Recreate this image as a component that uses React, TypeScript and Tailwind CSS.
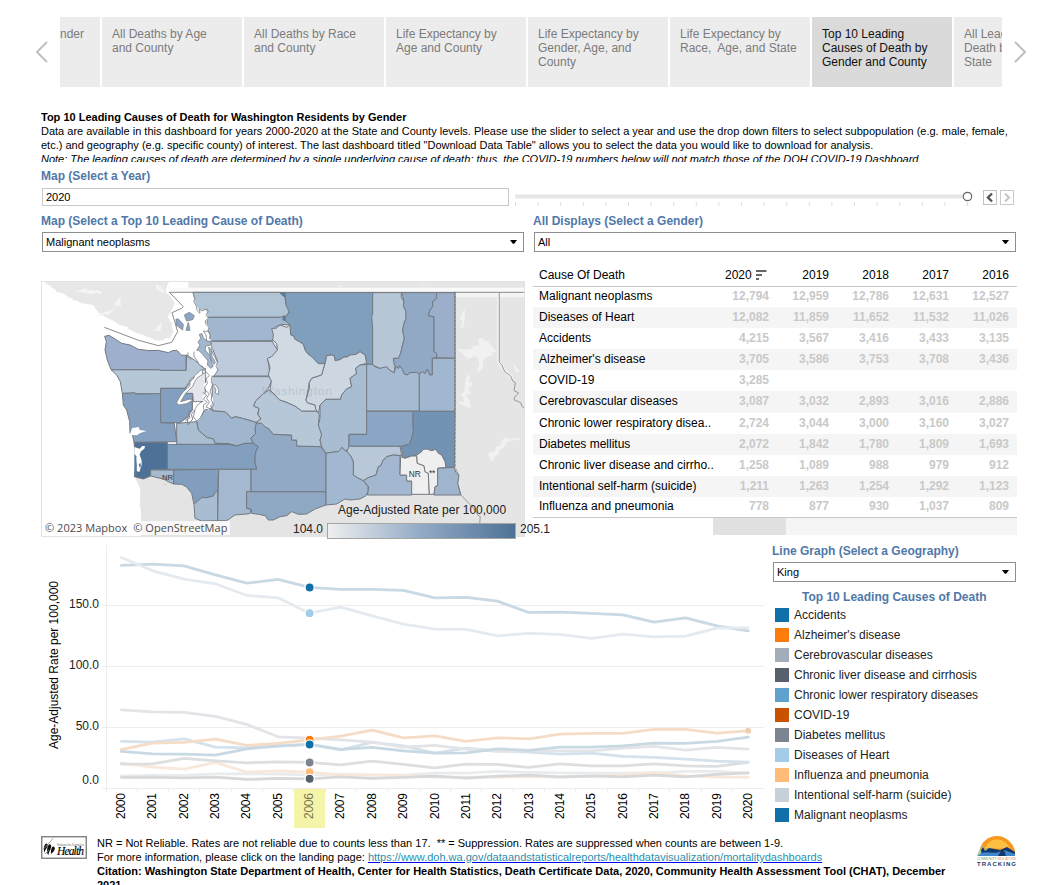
import React from "react";

const ARIAL = "font-['Liberation_Sans',Arial,sans-serif]";

const tabs = [
  "All Deaths by Age\nand County",
  "All Deaths by Race\nand County",
  "Life Expectancy by\nAge and County",
  "Life Expectancy by\nGender, Age, and\nCounty",
  "Life Expectancy by\nRace,  Age, and State",
  "Top 10 Leading\nCauses of Death by\nGender and County",
  "All Leading Causes of\nDeath by Gender and\nState",
];

const rows: [string, string[], string][] = [
  ["Malignant neoplasms", ["12,794", "12,959", "12,786", "12,631", "12,527"], "h-5"],
  ["Diseases of Heart", ["12,082", "11,859", "11,652", "11,532", "11,026"], "h-[21px]"],
  ["Accidents", ["4,215", "3,567", "3,416", "3,433", "3,135"], "h-[21px]"],
  ["Alzheimer's disease", ["3,705", "3,586", "3,753", "3,708", "3,436"], "h-[21px]"],
  ["COVID-19", ["3,285", "", "", "", ""], "h-[21px]"],
  ["Cerebrovascular diseases", ["3,087", "3,032", "2,893", "3,016", "2,886"], "h-[22px]"],
  ["Chronic lower respiratory disea..", ["2,724", "3,044", "3,000", "3,160", "3,027"], "h-[21px]"],
  ["Diabetes mellitus", ["2,072", "1,842", "1,780", "1,809", "1,693"], "h-[21px]"],
  ["Chronic liver disease and cirrho..", ["1,258", "1,089", "988", "979", "912"], "h-[21px]"],
  ["Intentional self-harm (suicide)", ["1,211", "1,263", "1,254", "1,292", "1,123"], "h-[21px]"],
  ["Influenza and pneumonia", ["778", "877", "930", "1,037", "809"], "h-5"],
];

const legend: [string, string][] = [
  ["Accidents", "bg-[#1170aa]"],
  ["Alzheimer's disease", "bg-[#fc7d0b]"],
  ["Cerebrovascular diseases", "bg-[#a3acb9]"],
  ["Chronic liver disease and cirrhosis", "bg-[#57606c]"],
  ["Chronic lower respiratory diseases", "bg-[#5fa2ce]"],
  ["COVID-19", "bg-[#c85200]"],
  ["Diabetes mellitus", "bg-[#7b848f]"],
  ["Diseases of Heart", "bg-[#a3cce9]"],
  ["Influenza and pneumonia", "bg-[#ffbc79]"],
  ["Intentional self-harm (suicide)", "bg-[#c8d0d9]"],
  ["Malignant neoplasms", "bg-[#1170aa]"],
];

const series: [string, number[]][] = [
  ["#e9ecee", [708, 707, 707, 702, 702, 703, 705, 703, 706, 706, 700, 700, 695, 698, 699, 700, 700, 700, 695, 695, 700]],
  ["#f8e8dc", [670, 682, 688, 668, 697, 693, 697, 705, 705, 707, 712, 712, 712, 710, 712, 710, 705, 698, 708, 712, 712]],
  ["#dcdedf", [673, 672, 656, 663, 669, 666, 668, 675, 664, 674, 684, 673, 674, 683, 672, 678, 678, 672, 678, 680, 668]],
  ["#d5e2ec", [605, 607, 597, 622, 624, 618, 614, 630, 608, 618, 640, 625, 633, 637, 643, 640, 650, 653, 658, 664, 667]],
  ["#d6d8da", [713, 712, 714, 712, 719, 716, 717, 711, 716, 713, 709, 715, 709, 706, 711, 708, 711, 706, 711, 704, 699]],
  ["#e3e4e8", [510, 516, 518, 530, 554, 591, 595, 600, 607, 622, 617, 628, 635, 633, 633, 633, 625, 620, 631, 623, 628]],
  ["#f5dcc7", [629, 610, 608, 598, 617, 611, 600, 589, 571, 594, 588, 605, 594, 597, 583, 581, 581, 569, 569, 580, 573]],
  ["#c8d9e4", [635, 642, 643, 646, 627, 619, 614, 629, 623, 633, 640, 639, 627, 632, 622, 622, 618, 610, 611, 605, 592]],
  ["#c8d9e4", [77, 73, 78, 105, 130, 119, 143, 149, 149, 152, 174, 173, 184, 218, 217, 221, 225, 247, 234, 258, 273]],
  ["#e4eaf0", [53, 93, 118, 132, 167, 174, 220, 202, 228, 253, 268, 269, 288, 281, 284, 296, 283, 291, 289, 265, 264]],
];

const dots: [number, string][] = [
  [143, "#1170aa"], [220, "#a3cce9"], [600, "#fc7d0b"], [614, "#1170aa"],
  [668, "#7b848f"], [697, "#ffbc79"], [717, "#57606c"],
];

/* West side of the state; the east side uses the same units shifted by 705. */
const west: [string, string][] = [
  ["#b0c4d6", "473,52 735,52 750,62 752,85 763,110 750,127 518,127 510,105 490,112 478,85"],
  ["#a1b7cf", "518,127 735,127 750,122 765,150 740,148 722,155 714,165 718,190 712,197 522,198 526,180 514,160"],
  ["#bdcbdc", "522,199 712,199 716,208 728,225 724,240 710,246 698,252 702,275 705,303 530,303 548,260 540,240 530,215"],
  ["#bdcbdc", "530,305 705,305 710,318 700,340 686,355 662,378 656,393 672,400 668,418 678,432 665,443 640,435 622,430 600,425 590,430 570,410 535,408 525,390 532,355"],
  ["#9fb6ce", "535,408 570,410 590,430 600,425 622,430 640,435 665,443 660,460 662,475 648,490 655,505 630,505 605,513 580,506 540,505 535,492 515,487 490,465 485,440 510,405 525,400"],
  ["#a9bed1", "425,445 485,440 490,465 515,487 535,492 540,505 580,506 605,513 425,508"],
  ["#b6c7d7", "228,284 375,284 453,286 455,240 478,255 500,272 515,290 470,310 450,340 377,340 377,357 262,355 256,320 245,300"],
  ["#9eb0cd", "209,184 222,181 240,192 260,205 285,210 310,223 345,227 370,226 400,233 412,227 425,226 432,232 440,241 453,240 453,286 375,286 375,284 228,284 217,255 210,225 214,200"],
  ["#86a1c0", "262,355 300,353 302,357 377,356 377,443 418,445 425,500 297,502 292,478 285,475 284,440 275,405 265,390"],
  ["#829fbf", "377,340 450,340 473,355 472,400 460,425 435,443 377,443"],
  ["#e3e5ec", "513,280 510,380 475,380 473,355 445,355 455,335 475,315 490,295"],
  ["#839fbf", "397,508 580,508 605,513 630,505 655,505 670,515 664,527 660,540 660,560 665,583 397,583"],
  ["#4e7297", "297,502 397,502 397,583 347,585 347,603 325,612 298,605 303,560"],
  ["#a5bbd0", "347,585 416,585 416,627 400,620 385,612 347,603"],
  ["#819ebf", "416,585 551,583 548,648 540,652 535,663 515,668 500,668 490,676 477,688 470,655 455,636 440,628 416,627"],
  ["#a8bdd2", "548,648 548,737 500,738 480,730 477,688 490,676 500,668 515,668 535,663 540,652"],
  ["#a4b9cf", "551,583 648,583 648,650 635,650 635,700 648,702 645,716 600,720 575,737 548,737"],
  ["#8fa8c4", "635,650 873,650 873,690 840,702 815,717 790,718 770,710 755,722 735,725 715,735 700,735 690,722 670,718 650,715 648,702 635,700"],
  ["#92a9c6", "680,445 690,455 702,462 715,478 770,480 770,495 785,495 785,513 860,515 862,525 873,535 873,650 648,650 648,583 665,583 660,560 660,540 664,527 670,515 655,505 648,490 662,475 660,460 665,443"],
];

const east: [string, string][] = [
  ["#b6c7d7", "-3,345 15,360 28,374 50,382 75,393 95,408 140,408 148,418 145,450 152,465 155,480 150,495 155,515 80,513 80,495 65,495 65,480 10,478 -3,462 -15,455 -25,445 -43,443 -27,432 -36,418 -33,400 -49,393 -43,378 -19,355"],
  ["#7f9fbd", "30,53 308,53 308,268 290,268 288,250 285,240 270,230 258,238 240,240 232,246 222,246 210,254 195,257 193,243 185,240 170,242 165,266 145,266 128,248 112,235 105,225 100,208 88,200 75,193 70,182 62,180 60,150 42,132 58,112 48,90 45,65"],
  ["#d0dae3", "50,157 60,150 62,180 70,182 75,193 88,200 100,208 105,225 112,235 128,248 145,266 165,266 155,300 125,310 118,322 115,340 108,375 112,383 135,390 140,408 95,408 75,393 50,382 28,374 15,360 0,345 4,318 -5,300 0,278 -8,250 5,245 22,225 20,205 8,195 10,178 5,160 18,160 30,150"],
  ["#ccd7e1", "165,266 170,242 185,240 193,243 195,257 210,254 222,246 232,246 240,240 258,238 270,230 285,240 290,265 270,270 257,280 260,295 240,310 245,335 230,342 215,360 212,373 168,373 150,390 146,413 138,405 135,390 112,383 108,375 118,340 118,322 125,310 155,300"],
  ["#a8bdd2", "168,373 212,373 215,360 230,342 245,335 240,310 260,295 257,280 270,270 290,268 290,478 237,478 237,525 225,527 217,517 205,530 185,532 168,535 155,515 150,495 155,480 145,450 150,430 150,390"],
  ["#a5bbd1", "290,268 308,268 315,275 330,280 340,275 350,275 358,285 373,293 378,272 385,280 388,272 398,284 402,296 412,300 418,293 440,292 448,297 448,408 290,408"],
  ["#b7c7d7", "308,53 395,53 393,65 402,80 400,92 408,110 408,130 402,145 398,165 403,190 397,212 392,235 385,250 370,250 375,270 373,293 358,285 350,275 330,280 308,270 308,160 305,125 308,118"],
  ["#92a9c6", "395,53 500,53 500,70 488,80 488,95 480,105 475,122 492,125 492,230 500,235 500,248 487,250 487,300 479,300 472,282 465,296 458,290 448,297 440,292 418,293 412,300 402,296 398,284 388,272 385,280 373,270 370,250 385,250 392,235 397,212 403,190 398,165 402,145 408,130 408,110 400,92 402,80"],
  ["#9bafca", "500,53 555,53 555,250 500,248 500,235 492,230 492,125 475,122 480,105 488,95 488,80 500,70"],
  ["#a1b6cf", "487,250 555,250 555,409 448,409 448,297 458,290 465,296 472,282 479,300 487,300"],
  ["#8ba6c4", "290,409 430,409 428,430 430,470 425,490 418,508 390,514 237,514 237,478 290,478"],
  ["#7393b5", "430,409 555,409 553,577 528,577 525,560 515,540 505,535 497,523 482,527 470,522 455,530 440,540 398,550 398,535 393,515 418,508 425,490 430,470"],
  ["#b9c8d9", "237,514 390,514 395,542 370,540 350,545 338,558 333,572 325,575 318,600 295,608 280,617 265,610 250,600 250,560 243,545 230,530"],
  ["#a3b8d0", "390,542 390,600 410,600 410,618 425,618 425,660 292,660 296,635 280,617 295,608 318,600 325,575 333,572 338,558 350,545 370,540"],
  ["#efefef", "392,545 405,550 425,543 440,543 442,565 462,572 465,590 475,595 478,658 425,658 425,618 410,618 410,600 390,600"],
  ["#efefef", "440,540 455,530 460,523 470,522 485,527 497,523 505,535 515,540 525,560 528,577 503,580 503,632 495,635 492,658 478,658 475,595 465,590 462,572 442,565"],
  ["#9fb5ce", "503,580 553,577 557,592 567,600 563,625 572,660 492,660 495,635 503,632"],
  ["#a2b7d0", "168,535 185,532 205,530 217,517 225,527 232,530 243,545 250,560 250,600 265,610 280,617 294,635 294,650 288,662 270,672 240,675 225,672 200,687 168,690"],
];

function WashingtonMap() {
  return (
    <svg className="block h-full w-full" viewBox="21 21 1446 762">
      <defs>
        <filter id="coast" x="-5%" y="-5%" width="110%" height="110%">
          <feTurbulence type="fractalNoise" baseFrequency="0.045" numOctaves="2" seed="4" />
          <feDisplacementMap in="SourceGraphic" scale="9" xChannelSelector="R" yChannelSelector="G" />
        </filter>
      </defs>
      <rect x="18" y="18" width="1452" height="768" fill="#fff" />
      <path d="M740 18H1470V786H320L315 640L300 606L480 560L560 200L480 52L470 18Z" fill="#e5e5e5" />
      <path d="M300 170L370 200L430 110L470 60L510 120L560 300L540 400L480 440L460 260L400 226L310 212Z" fill="#fff" />
      <g filter="url(#coast)">
        <path d="M20 14H405L392 45L420 85L400 125L415 170L405 190L370 197L300 172L200 120L175 90L140 85L60 45Z" fill="#e7e7e7" />
        <path d="M120 50l30-10 20 8 20-4 10 10-28 4M180 125l60-25-15 18zM240 90l20-30-6 34zM360 26l35 25-30-6M330 160l30 5 20-25-4 30z" fill="#f4f4f4" />
      </g>
      <path d="M318 612L385 612L440 630L470 655L480 740L575 740L640 715L700 735L873 690L998 655L1000 786H318L322 720L314 690L319 650Z" fill="#e4e4e4" />
      <path d="M460 18H1470V38H460Z" fill="#e6e6e6" />
      <path d="M403 45H1467" stroke="#f9f9f9" strokeWidth="14" />
      <path d="M1262 58H1470" stroke="#f4f4f4" strokeWidth="17" />
      <path d="M1391 62V262L1432 310" fill="none" stroke="#f2f2f2" strokeWidth="9" />
      <g fill="#f1f1f1">
        <path d="M1276 125l8-18 6-2 0 24-6 32-6-4 4-20-6-4zM1265 220l20 4 22-2 8-8 14-2 4-8-4-12 14-4 6 10 18 0-6 8 10 6 14 18-16 4 6 8-22 4-10 14 2 16-10 12-10 2 8-22-4-20-10-4-20 8z" />
        <path d="M1290 328l6-28 10 2-6 18 12 2-2 12-10 6 8 14-16 6 10 14 6 26-20-8-18-8 4-6 14 4-4-16-8-6 12-8zM1434 266l6 4 14 20-12 0zM1359 540l4-8 18-4 0-12 14-4 8-18 12-8 4 6 36-2-2 4-34 4-14 20-10 6-4 14-14 8 0 10-8 2z" />
        <path d="M1160 20l6 12 12 6-14-4zM920 30l0 8-10-6z" />
      </g>
      <path d="M403 52H1467" stroke="#8c8c8c" strokeWidth="3" />
      <path d="M403 52L445 95L440 100L411 113L428 170L410 202L370 212L308 195L208 157" fill="none" stroke="#8c8c8c" strokeWidth="3" strokeLinejoin="round" />
      <path d="M1393 52V262l7 7 9 20 18 14 6 15 8 5-4 24 14 7-12 12-2 8 20 9 4 11 7 5 2 12" fill="none" stroke="#888" strokeWidth="2.5" />
      <path d="M1262 580l9 20-3 25 10 35 14 15 28 30 8 15 8 5-2 20-14 25-4 12" fill="none" stroke="#8b8b8b" strokeWidth="2.5" />
      <g stroke="#737980" strokeWidth="3" strokeLinejoin="round">
        {west.map(([c, p]) => <polygon key={p} fill={c} points={p} />)}
        <g transform="translate(705 0)">
          {east.map(([c, p]) => <polygon key={p} fill={c} points={p} />)}
        </g>
        <path fill="#587fa6" d="M735 53l15 0 2 12-8-2zM745 124l6 2 0 12-8-4z" />
      </g>
      <path d="M1260 50V577" stroke="#7b8086" strokeWidth="3.5" strokeDasharray="9 3" />
      {/* Puget Sound and its islands */}
      <g transform="translate(315 30)" strokeWidth="2.5" strokeLinejoin="round">
        <path fill="#fff" d="M158 22L165 55L178 75L198 74L205 100L198 112L207 128L200 150L215 170L218 205L232 232L230 258L218 275L216 300L212 322L220 345L205 375L192 362L188 380L178 405L165 408L160 385L172 350L190 352L188 335L200 320L190 300L200 290L198 248L178 238L162 215L160 200L138 210L120 205L130 100L140 60Z" />
        <path fill="none" stroke="#80868d" d="M158 22L165 40L161 50L168 60L172 78L180 85L178 72L186 78L200 72L205 80L198 90L205 100L195 108L198 118L207 128L202 140L190 138L198 150L200 168L215 170L214 190L218 205L224 215L232 232L228 245L235 255L220 276L216 272L214 290L218 300L210 318L215 330L214 345L222 360L212 372L198 366L208 352L200 340L208 326L196 316L194 306L202 296L199 280L208 272L200 262" />
        <path fill="none" stroke="#80868d" d="M138 208L146 218L154 224M144 202L144 214M162 200L162 215L172 228L178 240L192 250L198 262L186 268M188 322L200 330L190 342L202 352L190 360L192 378L182 398L170 408L160 396L166 370L176 356L188 350" />
        <g stroke="#80868d" fill="#8ba7c5">
          <path d="M133 90L148 82L163 92L158 104L140 108Z" />
          <path d="M108 102L115 102L130 118L128 135L108 120Z" />
          <path d="M145 112L150 136L138 136Z" />
          <path fill="#a1b7cf" d="M178 148L186 146L190 158L200 168L212 170L212 180L196 184L196 196L212 214L214 232L220 244L212 250L202 240L204 228L188 208L176 196L170 196L180 180L174 172L182 160Z" />
          <path fill="#a1b7cf" d="M206 186L214 196L216 214L226 232L222 238L212 222Z" />
          <path fill="#fff" d="M218 300L228 300L236 314L236 328L226 324L228 312Z" />
        </g>
        <path fill="#fff" stroke="#80868d" d="M186 252L164 272L160 282L150 290L150 302L130 320L120 334L110 352L114 360L140 356L158 346L150 342L122 350L136 326L158 304L164 290L172 278L188 268Z" />
        <path fill="none" stroke="#80868d" strokeWidth="3" d="M156 350L158 376L146 388L150 398L136 408M148 374L146 396L130 402M164 376L154 388L158 402L146 418M142 400L144 420" />
      </g>
      <g fill="#fff">
        <path d="M284 480l7-20 20-4 3 9 20 3-20 7-8 6zM298 516l16 5 8-8 8 0-2 8-10 8-4 10 6 18 0 12-7 22-10-4 2-18-7-34z" />
        <path d="M298 536l6 8 2 58-8 4z" fill="#587b9d" />
        <path d="M311 568l5-4 2 8-4 6z" fill="#587b9d" />
      </g>
      <g fontFamily="Liberation Sans, Arial, sans-serif" fill="#333">
        <text x="682" y="361" fontSize="35" fill="#8c97a3" fillOpacity=".35" textLength="208">Washington</text>
        <text x="381" y="614" fontSize="23">NR</text>
        <text x="1121" y="606" fontSize="25">NR</text>
        <text x="1182" y="602" fontSize="25" letterSpacing="-1">**</text>
        <text x="388" y="630" fontSize="18">.</text>
      </g>
    </svg>
  );
}

function Select({ value }: { value: string }) {
  return (
    <div className="flex h-5 items-center justify-between border border-[#8e8e8e] bg-white pr-[6px] pl-[3px] text-[11px] text-black">
      <span>{value}</span>
      <svg width="7" height="4" viewBox="0 0 7 4"><path d="M0 0H7L4.2 3.7H2.8Z" fill="#000" /></svg>
    </div>
  );
}

const heading = "text-[12px] leading-[14px] font-bold text-[#5078a9]";

function LineChart() {
  const x = (i: number) => 121.4 + 31.34 * i;
  const y = (v: number) => 539.8 + v / 3;
  return (
    <svg className="block shrink-0" width="723" height="292" viewBox="41 540 723 292" fontFamily="Liberation Sans, Arial, sans-serif">
      <g stroke="#ededed" strokeWidth="1" shapeRendering="crispEdges">
        <path d="M102 605.5H764M102 666.5H764M102 727.5H764M102 788.5H764M106.5 545V792" />
        {Array.from({ length: 20 }, (_, i) => <path key={i} d={`M${x(i) + 15.7} 788V792`} />)}
      </g>
      <rect x="294" y="789" width="31" height="39" fill="#f5f5a9" />
      <g fill="none" strokeWidth="2.8" strokeLinejoin="round" strokeLinecap="round">
        {series.map(([c, d], k) => (
          <polyline key={k} stroke={c} points={d.map((v, i) => `${x(i)},${y(v)}`).join(" ")} />
        ))}
      </g>
      <circle cx={x(20)} cy={y(573)} r="3" fill="#f0ceb3" />
      {dots.map(([v, c], k) => (
        <circle key={k} cx={x(6) + 0.2} cy={y(v)} r="4.6" fill={c} stroke="#fff" strokeWidth="1.3" />
      ))}
      <g fontSize="12" fill="#222" textAnchor="end">
        <text x="99" y="608">150.0</text>
        <text x="99" y="669">100.0</text>
        <text x="99" y="730">50.0</text>
        <text x="99" y="784">0.0</text>
      </g>
      <text transform="translate(58 749) rotate(-90)" fontSize="12" textLength="168">Age-Adjusted Rate per 100,000</text>
      <g fontSize="12">
        {Array.from({ length: 21 }, (_, i) => (
          <text key={i} transform={`translate(${x(i) + 3.7} 819) rotate(-90)`} fill={i === 6 ? "#777755" : "#000"} textLength="26">{2000 + i}</text>
        ))}
      </g>
    </svg>
  );
}

export default function App() {
  return (
    <div className={`${ARIAL} flex h-[885px] w-[1048px] flex-col overflow-hidden bg-white text-black`}>
      <nav className="mt-[17px] flex h-[70px] shrink-0 items-center">
        <div className="flex w-[60px] justify-center pl-6">
          <svg width="12" height="22" viewBox="0 0 12 22"><path d="M11 1L1 11L11 21" fill="none" stroke="#c0c0c0" strokeWidth="2" /></svg>
        </div>
        <div className="flex h-[70px] w-[942px] gap-[2px] overflow-hidden text-[12px] leading-[14px] text-[#7b7b7b]">
          <div className="w-10 shrink-0 bg-[#ececec] pt-[10px]">nder</div>
          {tabs.map((t, i) => (
            <div key={t} className={`w-[140px] shrink-0 pt-[10px] pl-[10px] whitespace-pre ${i === 5 ? "bg-[#dadada] text-[#111]" : "bg-[#ececec]"}`}>{t}</div>
          ))}
        </div>
        <svg width="12" height="22" viewBox="0 0 12 22" className="ml-3"><path d="M1 1L11 11L1 21" fill="none" stroke="#c0c0c0" strokeWidth="2" /></svg>
      </nav>

      <header className="mt-[23px] ml-[41px] h-[52px] shrink-0 overflow-hidden text-[11px] leading-[14px] whitespace-nowrap">
        <p className="font-bold">Top 10 Leading Causes of Death for Washington Residents by Gender</p>
        <p>Data are available in this dashboard for years 2000-2020 at the State and County levels. Please use the slider to select a year and use the drop down filters to select subpopulation (e.g. male, female,</p>
        <p>etc.) and geography (e.g. specific county) of interest. The last dashboard titled "Download Data Table" allows you to select the data you would like to download for analysis.</p>
        <p className="italic">Note: The leading causes of death are determined by a single underlying cause of death; thus, the COVID-19 numbers below will not match those of the DOH COVID-19 Dashboard</p>
      </header>

      <section className="mt-[7px] ml-[41px] shrink-0">
        <h2 className={heading}>Map (Select a Year)</h2>
        <div className="mt-[5px] flex h-[18px] items-center">
          <div className="ml-px flex h-[18px] w-[467px] items-center border border-[#c8c8c8] pl-[3px] text-[11px]">2020</div>
          <svg width="460" height="18" viewBox="513 188 460 18" className="ml-1">
            <path d="M515 196.500H963" stroke="#e6e6e6" strokeWidth="4" />
            {Array.from({ length: 21 }, (_, i) => <path key={i} d={`M${515.5 + i * 22.6} 202V206`} stroke="#dedede" />)}
            <circle cx="967.500" cy="196.500" r="4.200" fill="#fff" stroke="#666" strokeWidth="1.200" />
          </svg>
          <div className="ml-[10px] flex gap-[3px]">
            <svg width="14" height="15" viewBox="0 0 14 15"><rect x=".5" y=".5" width="13" height="14" fill="#fff" stroke="#c2c2c2" /><path d="M9 3.500L5 7.500L9 11.500" fill="none" stroke="#555" strokeWidth="2.400" /></svg>
            <svg width="14" height="15" viewBox="0 0 14 15"><rect x=".5" y=".5" width="13" height="14" fill="#fff" stroke="#c9c9c9" /><path d="M5 3.500L9 7.500L5 11.500" fill="none" stroke="#c4c4c4" strokeWidth="2" /></svg>
          </div>
        </div>
      </section>

      <section className="mt-2 ml-[41px] flex shrink-0 gap-[9px]">
        <div className="w-[483px]">
          <h2 className={heading}>Map (Select a Top 10 Leading Cause of Death)</h2>
          <div className="mt-1 ml-px"><Select value="Malignant neoplasms" /></div>
        </div>
        <div className="w-[483px]">
          <h2 className={heading}>All Displays (Select a Gender)</h2>
          <div className="mt-1 ml-px"><Select value="All" /></div>
        </div>
      </section>

      <section className="ml-[41px] flex h-[288px] shrink-0 gap-2">
        <div className="relative mt-[29px] h-[256px] w-[484px] shrink-0 border border-[#e2e2e2]">
          <WashingtonMap />
          <div className="absolute bottom-px left-0 flex h-[14px] w-[188px] items-center gap-[6px] bg-white/75 pl-[3px] font-['Open_Sans',sans-serif] text-[11px] tracking-[0.03px] whitespace-nowrap text-[#4c4c4c]">
            <span>© 2023 Mapbox</span><span>© OpenStreetMap</span>
          </div>
          <div className="absolute top-[221px] left-[296px] text-[12px] leading-[14px] whitespace-nowrap text-[#222]">Age-Adjusted Rate per 100,000</div>
          <div className="absolute top-[240px] left-[251px] flex items-center text-[12px] leading-[14px] text-[#222]">
            <span className="-mt-[3px] w-[34px]">104.0</span>
            <span className="mt-[1px] h-4 w-[189px] border border-[#a6a6a0] bg-gradient-to-r from-[#efefef] via-[#92aac6] to-[#4e7297]" />
            <span className="-mt-[3px] ml-1">205.1</span>
          </div>
        </div>
        <div className="mt-[11px] w-[484px] text-[12px]">
          <div className="flex h-[24px] items-center border-b border-[#c8c8c8] pl-[6px]">
            <span className="w-[174px]">Cause Of Death</span>
            <span className="flex w-[60px] items-center gap-1 pl-3">2020
              <svg width="11" height="10" viewBox="0 0 11 10"><path d="M0 1H10.500M0 5H6M0 9H3" stroke="#666" strokeWidth="1.800" /></svg>
            </span>
            {["2019", "2018", "2017", "2016"].map((v) => <span key={v} className="w-[60px] pr-1 text-right">{v}</span>)}
          </div>
          <div className="border-b border-[#c8c8c8]">
            {rows.map(([name, vals, h], i) => (
              <div key={name} className={`flex items-center pb-[2px] pl-[6px] leading-[18px] ${h} ${i % 2 ? "bg-[#f5f5f5]" : "bg-white"}`}>
                <span className="w-[174px] whitespace-nowrap">{name}</span>
                {vals.map((v, k) => <span key={k} className="w-[60px] pr-1 text-right font-bold text-[#c9c9c9]">{v}</span>)}
              </div>
            ))}
          </div>
          <div className="ml-[180px] h-[17px] bg-[#f5f5f5]"><div className="h-full w-[73px] bg-[#e1e1e1]" /></div>
        </div>
      </section>

      <section className="ml-[41px] flex h-[292px] shrink-0">
        <LineChart />
        <aside className="ml-[8px] w-[244px] pt-1">
          <h2 className={heading}>Line Graph (Select a Geography)</h2>
          <div className="mt-1 ml-px"><Select value="King" /></div>
          <h3 className={`${heading} mt-2 ml-[30px]`}>Top 10 Leading Causes of Death</h3>
          <ul className="mt-px ml-[3px] text-[12px] text-[#222]">
            {legend.map(([name, c]) => (
              <li key={name} className="flex h-5 items-center gap-[5px]"><span className={`h-[14px] w-[14px] ${c}`} />{name}</li>
            ))}
          </ul>
        </aside>
      </section>

      <footer className="ml-[41px] flex h-[53px] shrink-0">
        <svg className="mt-1 shrink-0" width="46" height="23" viewBox="0 0 46 23">
          <rect x=".75" y=".75" width="44.500" height="21.500" fill="#fff" stroke="#777" strokeWidth="1.300" />
          <path d="M3 15C2 10 5 6 6.500 8C7.500 11 4 13 3.500 17ZM6.500 18C5 12 8 6 10 9C11 13 8 14 7.500 19ZM10 18C9.500 12 12 8 14 12C13.500 15 12 16 10 18Z" fill="#111" />
          <path d="M2.500 13L12 2.500M4 18L8 14" stroke="#888" strokeWidth=".8" />
          <text x="16" y="9.500" fontSize="3" fontFamily="Liberation Serif, serif" fill="#666" textLength="27" lengthAdjust="spacingAndGlyphs">Washington State Department of</text>
          <text x="16" y="18.500" fontSize="11.500" fontStyle="italic" fontFamily="Liberation Serif, serif" textLength="27" stroke="#000" strokeWidth=".15">Health</text>
        </svg>
        <div className="mt-1 ml-[10px] w-[870px] text-[11px] leading-[14px] whitespace-pre">
          <p>NR = Not Reliable. Rates are not reliable due to counts less than 17.  ** = Suppression. Rates are suppressed when counts are between 1-9.</p>
          <p>For more information, please click on the landing page: <a className="text-[#2a8fae] underline decoration-[#0000ee]">https://www.doh.wa.gov/dataandstatisticalreports/healthdatavisualization/mortalitydashboards</a></p>
          <p className="font-bold">Citation: Washington State Department of Health, Center for Health Statistics, Death Certificate Data, 2020, Community Health Assessment Tool (CHAT), December</p>
          <p className="font-bold">2021.</p>
        </div>
        <svg className="mt-1 ml-[9px] shrink-0" width="42" height="31" viewBox="0 0 42 31">
          <path d="M3 16C5 5 13 0 21 0C30 0 37 7 39 15L38 18Z" fill="#f7981c" />
          <path d="M9 12C12 6 16 3.500 22 3.500C28 4 32 8 34 13Z" fill="#fdc043" />
          <path d="M2 17L7 9L9 14L14 11L19 19L10 20L1 20Z" fill="#a9c9a4" />
          <path d="M5 14L7 11L9 15L13 12L24 14L31 11L39 16V20H6Z" fill="#12376b" />
          <path d="M1.500 20C9 12 17 20 25 15L22 20ZM28 14L39 18L39 20L30 20Z" fill="#3f86cd" />
          <text x="1" y="24" fontSize="3.200" fontFamily="Liberation Sans, Arial, sans-serif" fill="#65a765" textLength="39" lengthAdjust="spacingAndGlyphs">COMMUNITY <tspan fill="#dc8a60">INDICATORS</tspan></text>
          <text x="1" y="30" fontSize="6" fontWeight="bold" fontFamily="Liberation Sans, Arial, sans-serif" fill="#173e70" textLength="39">TRACKING</text>
        </svg>
      </footer>
    </div>
  );
}
